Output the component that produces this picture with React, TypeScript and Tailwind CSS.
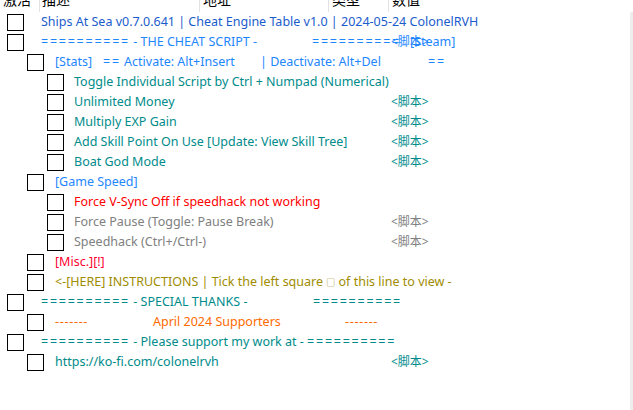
import React from 'react';

type Seg = { text: string; w?: string; dash?: boolean };

type Row = {
  level: 0 | 1 | 2;
  segs: Seg[];
  color: string;
  value?: boolean;
};

// cheat table entries, top to bottom
const rows: Row[] = [
  { level: 0, segs: [{ text: 'Ships At Sea v0.7.0.641 | Cheat Engine Table v1.0 | 2024-05-24 ColonelRVH' }], color: 'text-[#1b5ccc]' },
  {
    level: 0,
    segs: [{ text: '========== - THE CHEAT SCRIPT -', w: 'w-[271px]' }, { text: '==========', w: 'w-[98px]' }, { text: '[Steam]' }],
    color: 'text-[#1e86ff]',
    value: true,
  },
  {
    level: 1,
    segs: [
      { text: '[Stats]', w: 'w-[48px]' },
      { text: '== Activate: Alt+Insert', w: 'w-[157px]' },
      { text: '| Deactivate: Alt+Del', w: 'w-[168px]' },
      { text: '==' },
    ],
    color: 'text-[#1e86ff]',
  },
  { level: 2, segs: [{ text: 'Toggle Individual Script by Ctrl + Numpad (Numerical)' }], color: 'text-[#008b8b]' },
  { level: 2, segs: [{ text: 'Unlimited Money' }], color: 'text-[#008b8b]', value: true },
  { level: 2, segs: [{ text: 'Multiply EXP Gain' }], color: 'text-[#008b8b]', value: true },
  { level: 2, segs: [{ text: 'Add Skill Point On Use [Update: View Skill Tree]' }], color: 'text-[#008b8b]', value: true },
  { level: 2, segs: [{ text: 'Boat God Mode' }], color: 'text-[#008b8b]', value: true },
  { level: 1, segs: [{ text: '[Game Speed]' }], color: 'text-[#1e86ff]' },
  { level: 2, segs: [{ text: 'Force V-Sync Off if speedhack not working' }], color: 'text-[#ff0000]' },
  { level: 2, segs: [{ text: 'Force Pause (Toggle: Pause Break)' }], color: 'text-[#808080]', value: true },
  { level: 2, segs: [{ text: 'Speedhack (Ctrl+/Ctrl-)' }], color: 'text-[#808080]', value: true },
  { level: 1, segs: [{ text: '[Misc.][!]' }], color: 'text-[#ff0030]' },
  { level: 1, segs: [{ text: '<-[HERE] INSTRUCTIONS | Tick the left square \u25A1 of this line to view -' }], color: 'text-[#a08c00]' },
  {
    level: 0,
    segs: [{ text: '========== - SPECIAL THANKS -', w: 'w-[272px]' }, { text: '==========' }],
    color: 'text-[#008b8b]',
  },
  {
    level: 1,
    segs: [
      { text: '-------', w: 'w-[98px]', dash: true },
      { text: 'April 2024 Supporters', w: 'w-[192px]' },
      { text: '-------', dash: true },
    ],
    color: 'text-[#ff6a00]',
  },
  { level: 0, segs: [{ text: '========== - Please support my work at - ==========' }], color: 'text-[#008b8b]' },
  { level: 1, segs: [{ text: 'https://ko-fi.com/colonelrvh' }], color: 'text-[#008b8b]', value: true },
];

const boxMargin = ['ml-[7px]', 'ml-[27px]', 'ml-[47px]'];
const textMargin = ['ml-[17px]', 'ml-[11px]', 'ml-[10px]'];

const font = { fontFamily: '"Noto Sans", "Noto Sans CJK SC", sans-serif' };

// "=" runs are wider in the original font, and the little square is smaller
const renderText = (text: string) =>
  text.split(/(=+|\u25A1)/).map((part, i) => {
    if (part.startsWith('=')) return <span key={i} className="tracking-[1.75px]">{part}</span>;
    if (part === '\u25A1') return <span key={i} className="text-[9px]">{part}</span>;
    return <React.Fragment key={i}>{part}</React.Fragment>;
  });

const TableRow: React.FC<{ row: Row }> = ({ row }) => (
  <div className={`flex h-[20px] items-center ${row.color}`}>
    <div className="flex w-[391px] shrink-0 items-center overflow-visible whitespace-pre">
      <div className={`h-[17px] w-[17px] shrink-0 border border-black bg-white ${boxMargin[row.level]}`} />
      <div className={`flex shrink-0 ${textMargin[row.level]}`}>
        {row.segs.map((s, i) => (
          <span key={i} className={`shrink-0 ${s.w ?? ''} ${s.dash ? 'tracking-[0.7px]' : ''}`}>
            {renderText(s.text)}
          </span>
        ))}
      </div>
    </div>
    {row.value && <span className="relative whitespace-pre text-[12px]">{'<脚本>'}</span>}
  </div>
);

const App: React.FC = () => {
  return (
    <div className="relative h-[410px] w-[633px] overflow-hidden bg-white text-[12.5px] leading-none" style={font}>
      {/* header, scrolled so only the lower half of the labels shows */}
      <div className="flex h-[12px] overflow-hidden text-[14px] text-black">
        <div className="w-[40px] shrink-0 border-r border-[#e3e3e3] pl-[3px]"><div className="-mt-[7px]">激活</div></div>
        <div className="w-[160px] shrink-0 border-r border-[#e3e3e3] pl-[2px]"><div className="-mt-[7px]">描述</div></div>
        <div className="w-[129px] shrink-0 border-r border-[#e3e3e3] pl-[3px]"><div className="-mt-[7px]">地址</div></div>
        <div className="w-[60px] shrink-0 border-r border-[#e3e3e3] pl-[3px]"><div className="-mt-[7px]">类型</div></div>
        <div className="flex-1 pl-[3px]"><div className="-mt-[7px]">数值</div></div>
      </div>

      <div className="flex">
        <div className="flex-1">
          {rows.map((row, i) => (
            <TableRow key={i} row={row} />
          ))}
        </div>
        {/* scrollbar edge */}
        <div className="h-[398px] w-[3px] shrink-0 bg-[#eeeeee]" />
      </div>
    </div>
  );
};

export default App;
